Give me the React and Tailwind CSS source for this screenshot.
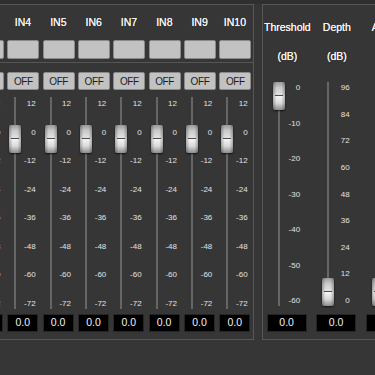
import React from 'react';

const channels = Array.from({ length: 8 }, (_, i) => `IN${i + 3}`);
const chScale = ['12', '0', '-12', '-24', '-36', '-48', '-60', '-72'];
const thrScale = ['0', '-10', '-20', '-30', '-40', '-50', '-60'];
const depthScale = ['96', '84', '72', '60', '48', '36', '24', '12', '0'];

// silver fader knob
function Thumb({ className }) {
    return (
        <div className={`absolute w-[12px] h-[28px] rounded-[2px] overflow-hidden shadow-[0_1px_2px_rgba(0,0,0,0.7)] ${className}`}>
            <div className="h-[14px] bg-[linear-gradient(to_bottom,#9a9a9a,#c9c9c9_40%,#e6e6e6)]" />
            <div className="h-[14px] bg-[linear-gradient(to_bottom,#f5f5f5,#dadada_50%,#8c8c8c)]" />
            <div className="absolute left-[2px] right-[2px] top-[13px] h-px bg-[#4d4d4d]" />
            <div className="absolute inset-0 bg-[linear-gradient(to_right,rgba(0,0,0,0.28),transparent_30%,transparent_70%,rgba(0,0,0,0.28))]" />
        </div>
    );
}

function ValueBox({ className }) {
    return (
        <div className={`h-[18px] bg-black border border-[#262626] flex items-center justify-center text-[10.5px] text-[#f2f2f2] ${className}`}>
            0.0
        </div>
    );
}

function Channel({ name }) {
    return (
        <div className="w-[35.33px] shrink-0 flex flex-col">
            <div className="h-[35px] flex items-center justify-center text-[10.5px] text-[#f2f2f2] [text-shadow:0_0_0.4px_#fff]">{name}</div>
            <div className="h-[19px] w-[32px] ml-[2px] bg-[#c2c2c2] border border-[#8a8a8a] rounded-[2px]" />
        </div>
    );
}

function ChannelLower() {
    return (
        <div className="w-[35.33px] shrink-0 flex flex-col">
            <div className="h-[18px] w-[32px] ml-[2px] bg-[#c2c2c2] border border-[#8a8a8a] rounded-[2px] flex items-center justify-center text-[10px] tracking-[-0.4px] text-[#1c1c1c]">
                OFF
            </div>
            <div className="relative h-[224px]">
                <div className="absolute left-[9px] top-[7px] bottom-[5px] w-[2px] bg-[#666]" />
                <div className="absolute right-[5px] top-[9px] bottom-[5px] flex flex-col justify-between items-end">
                    {chScale.map((s) => (
                        <div key={s} className="h-[10px] leading-[10px] text-[8px] text-[#e2e2e2]">{s}</div>
                    ))}
                </div>
                <Thumb className="left-[4px] top-[35px]" />
            </div>
            <ValueBox className="w-[31px] ml-[2px]" />
        </div>
    );
}

function DynColumn({ title, unit, scale, thumbTop }) {
    return (
        <div className="w-[49.5px] shrink-0 flex flex-col">
            <div className="mt-[15px] h-[14px] leading-[14px] text-center text-[10.5px] text-[#f2f2f2] whitespace-nowrap [text-shadow:0_0_0.4px_#fff]">{title}</div>
            <div className="mt-[15px] h-[14px] leading-[14px] text-center text-[10.5px] text-[#f2f2f2] [text-shadow:0_0_0.4px_#fff]">{unit}</div>
            <div className="relative h-[251px]">
                <div className="absolute left-[15px] top-[19px] bottom-[8px] w-[2px] bg-[#666]" />
                {scale && (
                    <div className="absolute right-[12px] top-[20px] bottom-[8px] flex flex-col justify-between items-end">
                        {scale.map((s) => (
                            <div key={s} className="h-[10px] leading-[10px] text-[8px] text-[#e2e2e2]">{s}</div>
                        ))}
                    </div>
                )}
                <Thumb className={`left-[10px] ${thumbTop}`} />
            </div>
            <ValueBox className="w-[40px] ml-[4px]" />
        </div>
    );
}

export default function App() {
    return (
        <div
            className="w-[375px] h-[375px] overflow-hidden bg-[#363636]"
            style={{ fontFamily: '"Liberation Sans", Arial, sans-serif' }}
        >
            <div className="h-[4px] bg-[#2f2f2f]" />
            <div className="flex">
                {/* input channels panel */}
                <div className="shrink-0 ml-[-31px] border border-[#575757] pb-[7px]">
                    <div className="flex pb-[3px]">
                        {channels.map((c) => <Channel key={c} name={c} />)}
                    </div>
                    <div className="h-px bg-[#555]" />
                    <div className="flex pt-[9px]">
                        {channels.map((c) => <ChannelLower key={c} />)}
                    </div>
                </div>

                {/* dynamics panel */}
                <div className="shrink-0 ml-[8px] border border-[#575757] pb-[7px] flex">
                    <DynColumn title="Threshold" unit="(dB)" scale={thrScale} thumbTop="top-[19px]" />
                    <DynColumn title="Depth" unit="(dB)" scale={depthScale} thumbTop="top-[215px]" />
                    <DynColumn title="Attack" unit="(ms)" scale={null} thumbTop="top-[215px]" />
                </div>
            </div>
        </div>
    );
}
